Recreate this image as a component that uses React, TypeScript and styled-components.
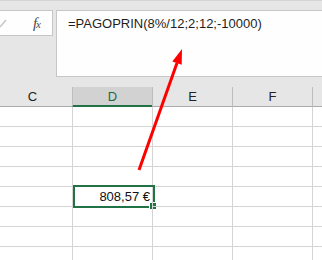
import React from 'react';
import styled, { createGlobalStyle } from 'styled-components';

const GlobalStyle = createGlobalStyle`
  html, body {
    margin: 0;
    padding: 0;
    background: #ffffff;
  }
`;

const Window = styled.div`
  position: relative;
  width: 322px;
  height: 260px;
  overflow: hidden;
  background: #e6e6e6;
  font-family: 'Liberation Sans', Arial, sans-serif;
  display: flex;
  flex-direction: column;
`;

const TopStrip = styled.div`
  height: 4px;
  background: #efefef;
  border-bottom: 1px solid #d4d4d4;
`;

const FormulaRow = styled.div`
  display: flex;
  align-items: flex-start;
  gap: 3px;
  margin-top: 9px;
`;

const EntryBox = styled.div`
  width: 53px;
  height: 26px;
  box-sizing: border-box;
  background: #fefefe;
  border: 1px solid #c6c6c6;
  border-left: none;
  display: flex;
  align-items: center;
  justify-content: space-between;
  padding-right: 12px;
`;

const Fx = styled.span`
  font-family: 'Liberation Serif', 'Times New Roman', serif;
  font-style: italic;
  font-size: 15px;
  color: #4a4a4a;
  letter-spacing: -1px;
  small {
    font-size: 11px;
  }
`;

const FormulaBox = styled.div`
  flex: 1;
  height: 67px;
  box-sizing: border-box;
  background: #fefefe;
  border: 1px solid #c6c6c6;
  border-right: none;
  padding: 5px 0 0 11px;
  font-size: 13px;
  line-height: 16px;
  color: #1e1e1e;
`;

const HeaderRow = styled.div`
  display: grid;
  grid-template-columns: repeat(5, 80px);
  margin-left: -8px;
  margin-top: 10px;
`;

const HeaderCell = styled.div<{ $active?: boolean }>`
  height: 20px;
  box-sizing: border-box;
  border-left: 1px solid #bdbdbd;
  border-bottom: 1px solid ${p => (p.$active ? '#217346' : '#ababab')};
  box-shadow: ${p => (p.$active ? 'inset 0 -1px 0 #217346' : 'none')};
  background: ${p => (p.$active ? '#d2d2d2' : '#e6e6e6')};
  color: ${p => (p.$active ? '#1d6b42' : '#222222')};
  font-size: 13px;
  line-height: 19px;
  text-align: center;
`;

const Sheet = styled.div`
  flex: 1;
  background: #ffffff;
  display: grid;
  grid-template-columns: repeat(5, 80px);
  grid-auto-rows: 20px;
  margin-left: -8px;
`;

const Cell = styled.div<{ $first?: boolean }>`
  position: relative;
  box-sizing: border-box;
  border-left: 1px solid ${p => (p.$first ? 'transparent' : '#d4d4d4')};
  border-bottom: 1px solid #d4d4d4;
  font-size: 13px;
  line-height: 19px;
  color: #111111;
  text-align: right;
  padding-right: 2px;
`;

const Selection = styled.div`
  position: absolute;
  left: 0;
  top: -2px;
  width: 82px;
  height: 23px;
  box-sizing: border-box;
  border: 2px solid #217346;
`;

const FillHandle = styled.div`
  position: absolute;
  right: -4px;
  bottom: -4px;
  width: 6px;
  height: 6px;
  background: #217346;
  border: 1px solid #ffffff;
`;

const Overlay = styled.svg`
  position: absolute;
  left: 0;
  top: 0;
  pointer-events: none;
`;

// G is only a sliver at the right edge, its letter is out of view
const columns = ['C', 'D', 'E', 'F', 'G'];
const rows = [0, 1, 2, 3, 4, 5, 6, 7];

const App = () => {
  return (
    <>
      <GlobalStyle />
      <Window>
        <TopStrip />
        <FormulaRow>
          <EntryBox>
            <svg width="8" height="10" viewBox="0 0 8 10">
              <path d="M0 9 L6 2" stroke="#c9c9c9" strokeWidth="1.6" fill="none" />
            </svg>
            <Fx>
              f<small>x</small>
            </Fx>
          </EntryBox>
          <FormulaBox>=PAGOPRIN(8%/12;2;12;-10000)</FormulaBox>
        </FormulaRow>
        <HeaderRow>
          {columns.map(c => (
            <HeaderCell key={c} $active={c === 'D'}>
              {c === 'G' ? '' : c}
            </HeaderCell>
          ))}
        </HeaderRow>
        <Sheet>
          {rows.map(r =>
            columns.map((c, i) => (
              <Cell key={`${c}${r}`} $first={i === 0}>
                {r === 4 && c === 'D' && (
                  <>
                    808,57 €
                    <Selection>
                      <FillHandle />
                    </Selection>
                  </>
                )}
              </Cell>
            ))
          )}
        </Sheet>
        <Overlay width="322" height="260" viewBox="0 0 322 260">
          <line x1="139" y1="170" x2="177" y2="63" stroke="#ff0000" strokeWidth="3" />
          <polygon points="182,49 172.3,61.4 181.7,64.8" fill="#ff0000" />
        </Overlay>
      </Window>
    </>
  );
};

export default App;
